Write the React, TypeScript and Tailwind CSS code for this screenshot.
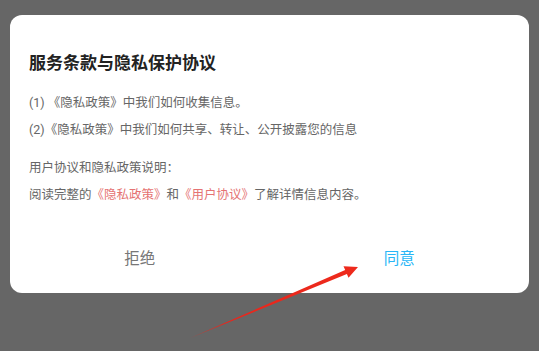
import React from "react";

export default function App() {
  const font = { fontFamily: 'Roboto, "Noto Sans CJK SC", sans-serif' };
  return (
    <div className="relative h-[351px] w-[539px] overflow-hidden bg-[#666666] px-[10px] pt-[15px]" style={font}>
      <div className="flex h-[278px] flex-col rounded-[12px] bg-white">
        <div className="pl-[19px] pt-[36px] text-[17px] font-bold leading-[24px] text-[#222222]">
          服务条款与隐私保护协议
        </div>
        <div className="mt-[14px] pl-[19px] text-[12.5px] leading-[27px] text-[#666666]">
          <div>(1) 《隐私政策》中我们如何收集信息。</div>
          <div>(2)《隐私政策》中我们如何共享、转让、公开披露您的信息</div>
          <div className="mt-[11px]">用户协议和隐私政策说明：</div>
          <div>
            阅读完整的<span className="text-[#e57373]">《隐私政策》</span>和<span className="text-[#e57373]">《用户协议》</span>了解详情信息内容。
          </div>
        </div>
        <div className="mt-[27px] flex h-[50px]">
          <div className="flex flex-1 items-center justify-center text-[15.5px] text-[#777777]">拒绝</div>
          <div className="flex flex-1 items-center justify-center text-[15.5px] text-[#29b6f6]">同意</div>
        </div>
      </div>
      <svg className="pointer-events-none absolute left-0 top-0" width="539" height="351" viewBox="0 0 539 351">
        <defs>
          <linearGradient id="ag" x1="190" y1="338" x2="358" y2="267" gradientUnits="userSpaceOnUse">
            <stop offset="0" stopColor="#e8261c" stopOpacity="0.5" />
            <stop offset="0.2" stopColor="#e8261c" stopOpacity="1" />
            <stop offset="1" stopColor="#ee2a1c" stopOpacity="1" />
          </linearGradient>
        </defs>
        <polygon
          points="189,338.5 345.2,270.1 343.5,266.3 358,267 348.5,277.8 346.9,274.1"
          fill="url(#ag)"
        />
      </svg>
    </div>
  );
}
